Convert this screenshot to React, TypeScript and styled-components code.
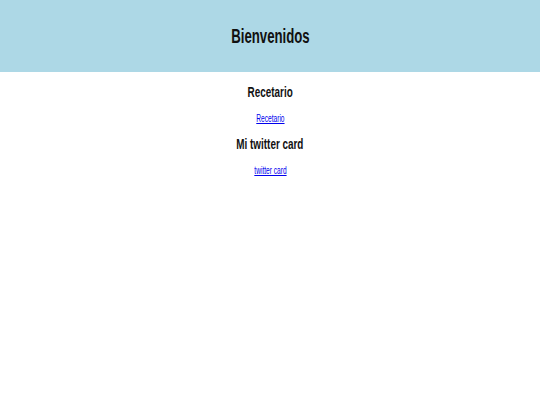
import React from "react";
import styled, { createGlobalStyle } from "styled-components";

const GlobalStyle = createGlobalStyle`
  html, body {
    margin: 0;
    padding: 0;
    background: #ffffff;
    font-family: "Liberation Sans", Arial, sans-serif;
  }
`;

const Header = styled.header`
  height: 72px;
  background: #add8e6;
  display: flex;
  align-items: center;
  justify-content: center;
`;

const Squeeze = styled.span`
  display: inline-block;
  transform: scaleX(0.66);
`;

const Title = styled.h1`
  margin: 0;
  font-size: 20px;
  font-weight: bold;
  color: #111;
`;

const Main = styled.main`
  display: flex;
  flex-direction: column;
  align-items: center;
  padding-top: 10px;
`;

const Section = styled.section`
  display: flex;
  flex-direction: column;
  align-items: center;
`;

const Heading = styled.h2`
  margin: 0;
  height: 21px;
  line-height: 20px;
  font-size: 15px;
  font-weight: bold;
  color: #111;
`;

const Link = styled.a`
  display: inline-block;
  height: 31px;
  line-height: 32px;
  font-size: 10px;
  color: #0000ee;
  text-decoration: underline;
  transform: scaleX(0.66);
`;

const links = [
  { title: "Recetario", label: "Recetario", href: "#recetario" },
  { title: "Mi twitter card", label: "twitter card", href: "#twitter" },
];

export default function App() {
  return (
    <>
      <GlobalStyle />
      <Header>
        <Title>
          <Squeeze>Bienvenidos</Squeeze>
        </Title>
      </Header>
      <Main>
        {links.map((l) => (
          <Section key={l.href}>
            <Heading>
              <Squeeze>{l.title}</Squeeze>
            </Heading>
            <Link href={l.href}>{l.label}</Link>
          </Section>
        ))}
      </Main>
    </>
  );
}
